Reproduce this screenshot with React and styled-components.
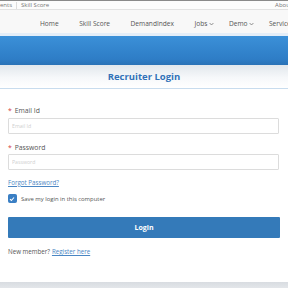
import React, { useState } from 'react';
import styled, { createGlobalStyle } from 'styled-components';

const Global = createGlobalStyle`
  html, body { margin: 0; padding: 0; background: #fff; overflow: hidden; }
  body { font-family: 'Open Sans', 'Liberation Sans', Arial, sans-serif; color: #555; }
  * { box-sizing: border-box; }
`;

const Page = styled.div`
  width: 288px;
  height: 288px;
  display: flex;
  flex-direction: column;
  overflow: hidden;
`;

// ===== top utility strip =====
const TopStrip = styled.div`
  height: 10px;
  flex-shrink: 0;
  border-top: 1px solid #8a8a8a;
  border-bottom: 1px solid #e2e2e2;
  background: #fcfcfc;
  display: flex;
  align-items: center;
  justify-content: space-between;
  font-size: 6px;
  color: #777;
  white-space: nowrap;
`;
const StripLinks = styled.div`
  display: flex;
  align-items: center;
  gap: 4px;
`;
const Sep = styled.span`
  width: 1px;
  height: 7px;
  background: #ddd;
`;
const About = styled.span`
  margin-right: -4px;
`;

// ===== main nav =====
const Nav = styled.nav`
  height: 26px;
  flex-shrink: 0;
  background: #f8f8f8;
  display: flex;
  align-items: center;
  padding: 4px 0 0 40px;
  gap: 20.5px;
  white-space: nowrap;
  font-size: 6.6px;
  color: #555;
  border-bottom: 3px solid #e4eef8;
`;
const NavItem = styled.span`
  display: flex;
  align-items: center;
  gap: 2px;
  margin-right: ${p => (p.$drop ? '-6px' : '0')};
`;
const Chevron = () => (
  <svg width="5" height="4" viewBox="0 0 5 4">
    <path d="M0.6 1 L2.5 3 L4.4 1" fill="none" stroke="#666" strokeWidth="0.7" />
  </svg>
);

// ===== blue band =====
const Band = styled.div`
  height: 29px;
  flex-shrink: 0;
  background: linear-gradient(#3b90d8, #2e7dc6 80%, #2a72b6);
`;

// ===== panel header =====
const PanelHead = styled.div`
  height: 24px;
  flex-shrink: 0;
  background: linear-gradient(#e2e7ec, #f6f8fa 55%, #fff);
  border-bottom: 1px solid #c8dcee;
  display: flex;
  align-items: center;
  justify-content: center;
  font-size: 9.5px;
  font-weight: 700;
  color: #3272b8;
`;

// ===== form =====
const Form = styled.form`
  padding: 17px 8px 0;
  display: flex;
  flex-direction: column;
`;
const Label = styled.label`
  font-size: 6.8px;
  line-height: 9px;
  color: #555;
  display: flex;
  gap: 3px;
`;
const Star = styled.span`
  color: #d33b3b;
`;
const Input = styled.input`
  width: 271px;
  height: 16px;
  margin-top: ${p => p.$mt || '2.5px'};
  border: 1px solid #dcdcdc;
  border-radius: 1px;
  padding: 0 3px;
  font-family: inherit;
  font-size: 5.2px;
  color: #555;
  outline: none;
  &::placeholder { color: #cfcfcf; }
`;
const Gap = styled.div`
  height: ${p => p.$h};
`;
const Link = styled.a`
  color: #4a86c3;
  text-decoration: underline;
  font-size: 6.2px;
  cursor: pointer;
`;
const Forgot = styled.div`
  line-height: 9px;
  font-size: 6.2px;
`;
const CheckRow = styled.label`
  display: flex;
  align-items: center;
  gap: 4.5px;
  height: 9px;
  font-size: 5.9px;
  color: #555;
  cursor: pointer;
`;
const Box = styled.span`
  width: 8.5px;
  height: 8.5px;
  border-radius: 1.5px;
  background: ${p => (p.$on ? '#3a7fc4' : '#fff')};
  border: 1px solid #3a7fc4;
  display: flex;
  align-items: center;
  justify-content: center;
`;
const LoginBtn = styled.button`
  width: 272px;
  height: 21px;
  border: none;
  border-radius: 1px;
  background: #347ab9;
  color: #fff;
  font-family: inherit;
  font-size: 7px;
  font-weight: 700;
  cursor: pointer;
`;
const Member = styled.div`
  line-height: 9px;
  font-size: 6.2px;
  color: #555;
  display: flex;
  gap: 2px;
`;
const Footer = styled.div`
  margin-top: auto;
  height: 6px;
  flex-shrink: 0;
  background: linear-gradient(#d8dce1, #e3e6ea);
`;

export default function App() {
  const [email, setEmail] = useState('');
  const [password, setPassword] = useState('');
  const [remember, setRemember] = useState(true);

  return (
    <Page>
      <Global />
      <TopStrip>
        <StripLinks>
          <span>ents</span>
          <Sep />
          <span>Skill Score</span>
        </StripLinks>
        <About>About</About>
      </TopStrip>
      <Nav>
        <NavItem>Home</NavItem>
        <NavItem>Skill Score</NavItem>
        <NavItem>DemandIndex</NavItem>
        <NavItem $drop>Jobs <Chevron /></NavItem>
        <NavItem $drop>Demo <Chevron /></NavItem>
        <NavItem>Services</NavItem>
      </Nav>
      <Band />
      <PanelHead>Recruiter Login</PanelHead>
      <Form onSubmit={e => e.preventDefault()}>
        <Label><Star>*</Star>Email Id</Label>
        <Input placeholder="Email Id" value={email} onChange={e => setEmail(e.target.value)} />
        <Gap $h="9.5px" />
        <Label><Star>*</Star>Password</Label>
        <Input type="password" placeholder="Password" value={password} onChange={e => setPassword(e.target.value)} $mt="1.5px" />
        <Gap $h="8px" />
        <Forgot><Link>Forgot Password?</Link></Forgot>
        <Gap $h="7.5px" />
        <CheckRow onClick={() => setRemember(r => !r)}>
          <Box $on={remember}>
            {remember && (
              <svg width="6" height="6" viewBox="0 0 6 6">
                <path d="M1 3.1 L2.4 4.5 L5 1.5" fill="none" stroke="#fff" strokeWidth="1.1" />
              </svg>
            )}
          </Box>
          Save my login in this computer
        </CheckRow>
        <Gap $h="13.5px" />
        <LoginBtn type="submit">Login</LoginBtn>
        <Gap $h="9.5px" />
        <Member>New member? <Link>Register here</Link></Member>
      </Form>
      <Footer />
    </Page>
  );
}
